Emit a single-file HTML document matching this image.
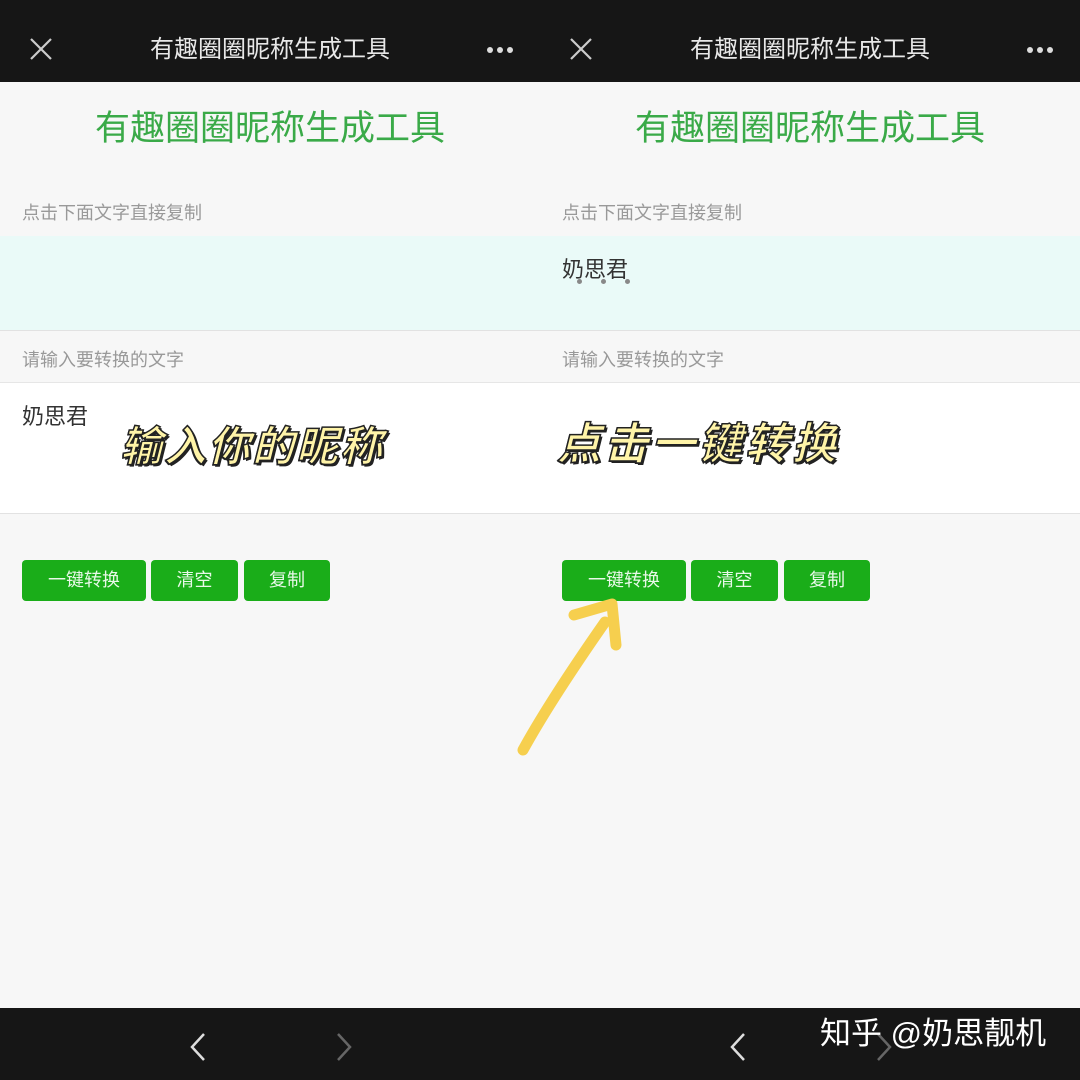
<!DOCTYPE html>
<html><head><meta charset="utf-8"><style>
*{margin:0;padding:0;box-sizing:border-box}
body{width:1080px;height:1080px;background:#f7f7f7;position:relative;overflow:hidden;font-family:"Liberation Sans","Noto Sans CJK SC",sans-serif}
.p{position:absolute;top:0;width:540px;height:1080px}
.hd{position:absolute;left:0;top:0;width:540px;height:82px;background:#161616;color:#e8e8e8}
.hd .t{position:absolute;left:0;width:540px;top:34px;text-align:center;font-size:24px;line-height:32px}
.hd .x{position:absolute;left:30px;top:38px;width:22px;height:22px}
.hd .d{position:absolute;left:487px;top:47px;line-height:0}
.hd .d i{display:inline-block;width:6px;height:6px;border-radius:50%;background:#ddd;margin-right:4px}
.ti{position:absolute;left:0;width:540px;top:106px;text-align:center;color:#3aaa48;font-size:35px;line-height:46px}
.lb{position:absolute;left:22px;color:#999;font-size:18px;line-height:24px}
.out{position:absolute;left:0;top:236px;width:540px;height:95px;background:#eafaf8;border-bottom:1px solid #e2e2e2}
.in{position:absolute;left:0;top:382px;width:540px;height:132px;background:#fff;border-top:1px solid #e6e6e6;border-bottom:1px solid #e2e2e2}
.b{position:absolute;top:560px;height:41px;background:#1aad19;color:#e8f8e8;font-size:18px;line-height:41px;text-align:center;border-radius:4px}
.st{position:absolute;font-weight:bold;font-style:italic;color:#fff4a8;-webkit-text-stroke:1.5px #222;text-shadow:2px 2px 0 #222,-1px 1px 0 #222;line-height:50px}
.ft{position:absolute;left:0;top:1008px;width:1080px;height:72px;background:#161616}
</style></head><body>
<div class="p" style="left:0">
<div class="hd"><svg class="x" viewBox="0 0 22 22"><path d="M1 1L21 21M21 1L1 21" stroke="#ccc" stroke-width="2.2"/></svg><div class="t">有趣圈圈昵称生成工具</div><div class="d"><i></i><i></i><i></i></div></div>
<div class="ti">有趣圈圈昵称生成工具</div>
<div class="lb" style="top:201px">点击下面文字直接复制</div>
<div class="out"></div>
<div class="lb" style="top:348px">请输入要转换的文字</div>
<div class="in"><div style="position:absolute;left:22px;top:16px;font-size:22px;color:#333">奶思君</div></div>
<div class="st" style="left:120px;top:422px;font-size:42px;letter-spacing:2px">输入你的昵称</div>
<div class="b" style="left:22px;width:124px">一键转换</div>
<div class="b" style="left:151px;width:87px">清空</div>
<div class="b" style="left:244px;width:86px">复制</div>
</div>
<div class="p" style="left:540px">
<div class="hd"><svg class="x" viewBox="0 0 22 22"><path d="M1 1L21 21M21 1L1 21" stroke="#ccc" stroke-width="2.2"/></svg><div class="t">有趣圈圈昵称生成工具</div><div class="d"><i></i><i></i><i></i></div></div>
<div class="ti">有趣圈圈昵称生成工具</div>
<div class="lb" style="top:201px">点击下面文字直接复制</div>
<div class="out"><div style="position:absolute;left:22px;top:16px;font-size:22px;color:#333">奶思君</div>
<div style="position:absolute;left:37px;top:43px;width:60px;height:6px"><i style="position:absolute;left:0;width:5px;height:5px;border-radius:50%;background:#888"></i><i style="position:absolute;left:24px;width:5px;height:5px;border-radius:50%;background:#888"></i><i style="position:absolute;left:48px;width:5px;height:5px;border-radius:50%;background:#888"></i></div></div>
<div class="lb" style="top:348px">请输入要转换的文字</div>
<div class="in"></div>
<div class="st" style="left:17px;top:420px;font-size:44px;letter-spacing:3px">点击一键转换</div>
<div class="b" style="left:22px;width:124px">一键转换</div>
<div class="b" style="left:151px;width:87px">清空</div>
<div class="b" style="left:244px;width:86px">复制</div>
</div>
<svg style="position:absolute;left:0;top:0" width="1080" height="1080"><path d="M523 750C545 710 575 665 605 622" stroke="#f6cf4e" stroke-width="11" fill="none" stroke-linecap="round"/><path d="M574 615L612 604L616 645" stroke="#f6cf4e" stroke-width="11" fill="none" stroke-linecap="round" stroke-linejoin="round"/></svg>
<div class="ft">
<svg style="position:absolute;left:188px;top:24px" width="20" height="30"><path d="M16 2L4 15L16 28" stroke="#ddd" stroke-width="2.5" fill="none"/></svg>
<svg style="position:absolute;left:334px;top:24px" width="20" height="30"><path d="M4 2L16 15L4 28" stroke="#666" stroke-width="2.5" fill="none"/></svg>
<svg style="position:absolute;left:728px;top:24px" width="20" height="30"><path d="M16 2L4 15L16 28" stroke="#ddd" stroke-width="2.5" fill="none"/></svg>
<svg style="position:absolute;left:874px;top:24px" width="20" height="30"><path d="M4 2L16 15L4 28" stroke="#666" stroke-width="2.5" fill="none"/></svg>
<div style="position:absolute;left:820px;top:6px;color:#fff;font-size:31px;line-height:40px">知乎 @奶思靓机</div>
</div>
</body></html>
